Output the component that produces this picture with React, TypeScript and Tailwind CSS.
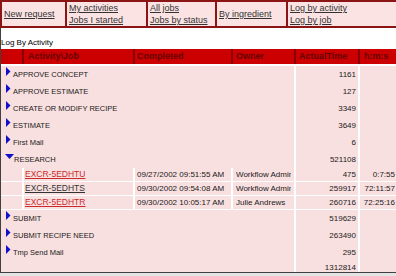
import React from 'react';

type Child = { job: string; visited?: boolean; completed: string; owner: string; time: string; hms: string };
type Activity = { name: string; time: string; open?: boolean; jobs?: Child[] };

const activities: Activity[] = [
  { name: 'APPROVE CONCEPT', time: '1161' },
  { name: 'APPROVE ESTIMATE', time: '127' },
  { name: 'CREATE OR MODIFY RECIPE', time: '3349' },
  { name: 'ESTIMATE', time: '3649' },
  { name: 'First Mail', time: '6' },
  {
    name: 'RESEARCH',
    time: '521108',
    open: true,
    jobs: [
      { job: 'EXCR-5EDHTU', completed: '09/27/2002 09:51:55 AM', owner: 'Workflow Admin', time: '475', hms: '0:7:55' },
      { job: 'EXCR-5EDHTS', visited: true, completed: '09/30/2002 09:54:08 AM', owner: 'Workflow Admin', time: '259917', hms: '72:11:57' },
      { job: 'EXCR-5EDHTR', completed: '09/30/2002 10:05:17 AM', owner: 'Julie Andrews', time: '260716', hms: '72:25:16' },
    ],
  },
  { name: 'SUBMIT', time: '519629' },
  { name: 'SUBMIT RECIPE NEED', time: '263490' },
  { name: 'Tmp Send Mail', time: '295' },
];

const cols = 'grid grid-cols-[21px_109px_96px_61px_62px_60px] gap-x-[2px] w-[419px]';

function Arrow({ open }: { open?: boolean }) {
  if (open) {
    return (
      <svg width="9" height="6" viewBox="0 0 9 6" className="mt-[3px] shrink-0">
        <polygon points="0,0 9,0 4.5,5" fill="#1010c8" />
      </svg>
    );
  }
  return (
    <svg width="5" height="9" viewBox="0 0 5 9" className="mt-[1px] mr-[2px] ml-[1px] shrink-0">
      <polygon points="0,0 4.5,4.5 0,9" fill="#1010c8" />
    </svg>
  );
}

function NavCell({ width, lines }: { width: string; lines: string[] }) {
  return (
    <div className={`${width} shrink-0 border-r-2 border-[#8b1414] flex flex-col justify-center px-[2px] leading-[12px]`}>
      {lines.map((l) => (
        <a key={l} href="#" className="underline text-[#333] whitespace-nowrap">
          {l}
        </a>
      ))}
    </div>
  );
}

export default function App() {
  return (
    <div className="w-[396px] h-[276px] overflow-hidden bg-white font-['Liberation_Sans',Arial,sans-serif]">
      {/* Top navigation */}
      <div className="flex h-[28px] w-[420px] border-2 border-[#8b1414] bg-[#fbe3e3] text-[9px]">
        <NavCell width="w-[65px]" lines={['New request']} />
        <NavCell width="w-[81px]" lines={['My activities', 'Jobs I started']} />
        <NavCell width="w-[69px]" lines={['All jobs', 'Jobs by status']} />
        <NavCell width="w-[71px]" lines={['By ingredient']} />
        <NavCell width="w-[120px]" lines={['Log by activity', 'Log by job']} />
      </div>

      {/* Log frame */}
      <div className="h-[245px] overflow-hidden border-l border-b border-[#404040]">
        <p className="pt-[10px] text-[8px] leading-[10px] text-black">Log By Activity</p>

        <div className="flex flex-col gap-y-[2px] mt-[1px]">
          {/* Header */}
          <div className={`${cols} h-[15px] bg-[#8b0000] text-[9px] font-bold text-[#660000] leading-[15px]`}>
            <div className="bg-[#cc0000]" />
            <div className="bg-[#cc0000] pl-[4px]">Activity\Job</div>
            <div className="bg-[#cc0000] pl-[2px]">Completed</div>
            <div className="bg-[#cc0000] pl-[3px]">Owner</div>
            <div className="bg-[#cc0000] pl-[3px]">ActualTime</div>
            <div className="bg-[#cc0000] pl-[4px]">h:m:s</div>
          </div>

          {activities.map((a) => (
            <React.Fragment key={a.name}>
              <div className={`${cols} h-[15px] text-[#1a1a1a]`}>
                <div className="col-span-4 bg-[#f9e0e0] flex items-start pl-[4px]">
                  <Arrow open={a.open} />
                  <span className="text-[7.5px] leading-[15px] pt-[1px]">{a.name}</span>
                </div>
                <div className="bg-[#f9e0e0] text-right pr-[2px] text-[8px] leading-[17px]">{a.time}</div>
                <div className="bg-[#f9e0e0]" />
              </div>
              {a.jobs?.map((j) => (
                <div key={j.job} className={`${cols} h-[12px] text-[8px] leading-[13px] text-[#1a1a1a]`}>
                  <div className="bg-[#f9e0e0]" />
                  <div className="bg-[#f9e0e0] pl-[1px]">
                    <a href="#" className={`underline text-[8.5px] ${j.visited ? 'text-[#333]' : 'text-[#cc2a2a]'}`}>
                      {j.job}
                    </a>
                  </div>
                  <div className="bg-[#f9e0e0] pl-[2px] whitespace-nowrap overflow-hidden">{j.completed}</div>
                  <div className="bg-[#f9e0e0] pl-[3px] pr-[3px] whitespace-nowrap overflow-hidden">
                    <div className="w-[55px] overflow-hidden">{j.owner}</div>
                  </div>
                  <div className="bg-[#f9e0e0] text-right pr-[2px]">{j.time}</div>
                  <div className="bg-[#f9e0e0] text-right pr-[25px]">{j.hms}</div>
                </div>
              ))}
            </React.Fragment>
          ))}

          {/* Total */}
          <div className={`${cols} h-[15px] text-[8px] leading-[13px] text-[#1a1a1a]`}>
            <div className="col-span-4 bg-[#f9e0e0]" />
            <div className="bg-[#f9e0e0] text-right pr-[2px]">1312814</div>
            <div className="bg-[#f9e0e0]" />
          </div>
        </div>
      </div>
      <div className="h-[3px] bg-[#e4e4e4]" />
    </div>
  );
}
